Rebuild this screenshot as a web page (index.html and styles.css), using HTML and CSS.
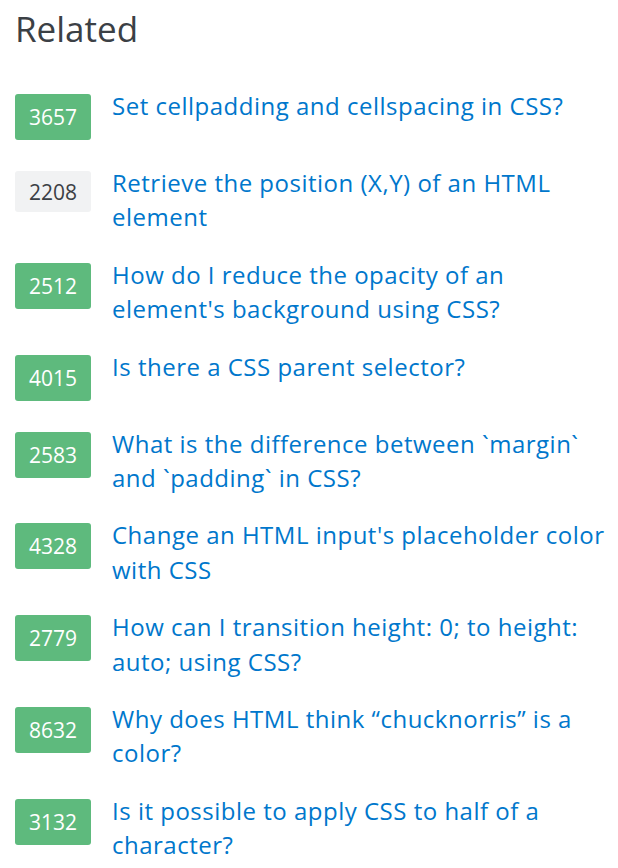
FILE: index.html
```html
<!DOCTYPE html>
<html>
<head>
<meta charset="utf-8">
<link rel="stylesheet" href="styles.css">
</head>
<body>
<div class="related">
  <h4 class="title">Related</h4>
  <ul class="list">
    <li class="item"><span class="badge accepted">3657</span><a class="link" href="#">Set cellpadding and cellspacing in CSS?</a></li>
    <li class="item"><span class="badge plain">2208</span><a class="link" href="#">Retrieve the position (X,Y) of an HTML element</a></li>
    <li class="item"><span class="badge accepted">2512</span><a class="link" href="#">How do I reduce the opacity of an element's background using CSS?</a></li>
    <li class="item"><span class="badge accepted">4015</span><a class="link" href="#">Is there a CSS parent selector?</a></li>
    <li class="item"><span class="badge accepted">2583</span><a class="link" href="#">What is the difference between `margin` and `padding` in CSS?</a></li>
    <li class="item"><span class="badge accepted">4328</span><a class="link" href="#">Change an HTML input's placeholder color with CSS</a></li>
    <li class="item"><span class="badge accepted">2779</span><a class="link" href="#">How can I transition height: 0; to height: auto; using CSS?</a></li>
    <li class="item"><span class="badge accepted">8632</span><a class="link" href="#">Why does HTML think “chucknorris” is a color?</a></li>
    <li class="item"><span class="badge accepted">3132</span><a class="link" href="#">Is it possible to apply CSS to half of a character?</a></li>
  </ul>
</div>
</body>
</html>
```
FILE: styles.css
```css
html, body {
  margin: 0;
  padding: 0;
  background: #ffffff;
}
body {
  font-family: "Open Sans", "Noto Sans", "Liberation Sans", sans-serif;
}
.related {
  padding: 0 12px 0 15px;
}
.title {
  margin: 0;
  padding-top: 6px;
  font-size: 35px;
  font-weight: 400;
  line-height: 46px;
  color: #3b4045;
}
.list {
  list-style: none;
  margin: 37px 0 0 0;
  padding: 0;
  display: flex;
  flex-direction: column;
  gap: 23px;
}
.item {
  display: flex;
  align-items: flex-start;
  gap: 21px;
}
.badge {
  flex: 0 0 76px;
  display: flex;
  align-items: center;
  justify-content: center;
  margin: 5px 0 3px 0;
  border-radius: 3px;
  font-size: 21px;
}
.accepted {
  height: 46px;
  background: #5eba7d;
  color: #ffffff;
}
.plain {
  height: 41px;
  background: #f1f2f3;
  color: #3b4045;
}
.link {
  flex: 1 1 auto;
  font-size: 24px;
  line-height: 34.4px;
  color: #0077cc;
  text-decoration: none;
  letter-spacing: 0.5px;
}
```
